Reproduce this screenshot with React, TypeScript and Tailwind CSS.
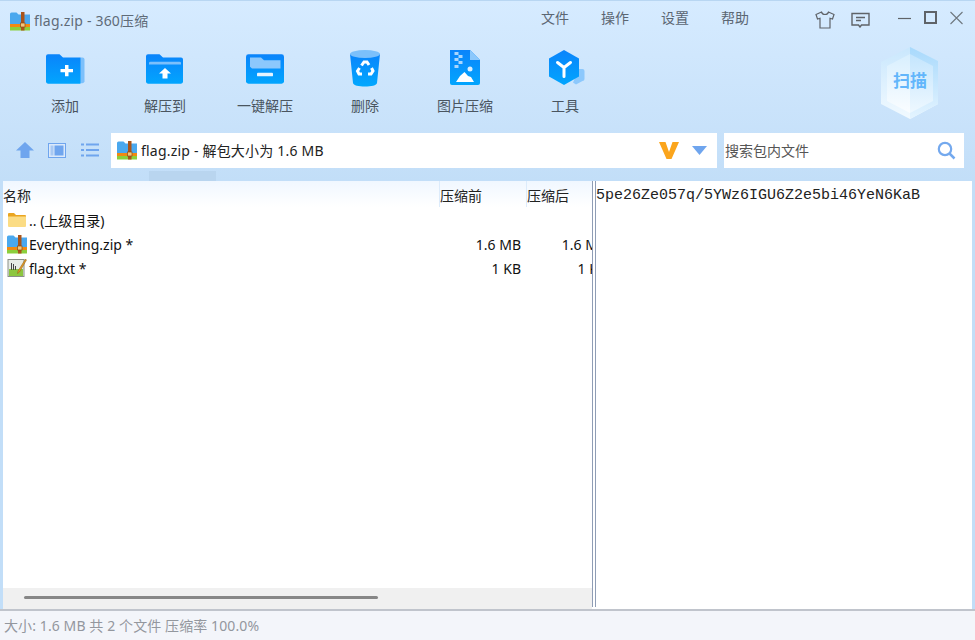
const uiFont = { fontFamily: '"Noto Sans", "Noto Sans CJK SC", sans-serif' }

function ZipIcon({ size = 20 }: { size?: number }) {
  return (
    <svg width={size} height={size} viewBox="0 0 20 20" className="shrink-0">
      <path d="M0 3a1.500 1.500 0 0 1 1.500-1.500h5l2 2H20V14H0z" fill="#4aa8ee" />
      <rect x="0" y="13" width="20" height="3" fill="#f08a12" />
      <rect x="0" y="16" width="20" height="3.500" fill="#8ccf3c" />
      <rect x="11" y="1" width="3.500" height="18.500" fill="#a9541a" />
      <rect x="10.500" y="12" width="4.500" height="4" fill="#f4c67a" stroke="#8a4a14" strokeWidth="0.700" />
    </svg>
  )
}

function AddIcon() {
  return (
    <svg width="40" height="32" viewBox="0 0 40 35" preserveAspectRatio="none" className="mt-[2px]">
      <defs>
        <linearGradient id="fa" x1="0" y1="0" x2="0" y2="1">
          <stop offset="0" stopColor="#0a84fb" />
          <stop offset="1" stopColor="#02a5fe" />
        </linearGradient>
      </defs>
      <rect x="34" y="5" width="5.500" height="28" rx="2" fill="#7cc0fb" />
      <path d="M1 3.500A2 2 0 0 1 3 1.500h11.500l3.500 3.500h17.500v28.500H3a2 2 0 0 1-2-2z" fill="url(#fa)" />
      <path d="M15.500 17.500h4.500v-4.500h3.500v4.500h4.500v3.500h-4.500v4.500h-3.500v-4.500h-4.500z" fill="#fff" />
    </svg>
  )
}

function ExtractIcon() {
  return (
    <svg width="40" height="32" viewBox="0 0 40 35" preserveAspectRatio="none" className="mt-[2px]">
      <defs>
        <linearGradient id="fb" x1="0" y1="0" x2="0" y2="1">
          <stop offset="0" stopColor="#0a84fb" />
          <stop offset="1" stopColor="#02a5fe" />
        </linearGradient>
      </defs>
      <path d="M1 3.500A2 2 0 0 1 3 1.500h11.500l3.500 3.500h18a2 2 0 0 1 2 2V31.500a2 2 0 0 1-2 2H3a2 2 0 0 1-2-2z" fill="url(#fb)" />
      <path d="M4 11a1.500 1.500 0 0 1 1.500-1.500h29a1.500 1.500 0 0 1 1.500 1.500v1.500H4z" fill="#7cc0fb" />
      <path d="M20 16.500l6 6h-3.500v5.500h-5v-5.500H14z" fill="#fff" />
    </svg>
  )
}

function OneKeyIcon() {
  return (
    <svg width="40" height="32" viewBox="0 0 40 35" preserveAspectRatio="none" className="mt-[2px]">
      <defs>
        <linearGradient id="fc" x1="0" y1="0" x2="0" y2="1">
          <stop offset="0" stopColor="#0a84fb" />
          <stop offset="1" stopColor="#02a5fe" />
        </linearGradient>
      </defs>
      <rect x="1" y="1.500" width="38" height="32" rx="2.500" fill="url(#fc)" />
      <path d="M5 5h11l3 3h16.500v9H7l-2-2z" fill="#8cc8fc" />
      <rect x="12" y="21.500" width="16" height="4" rx="1" fill="#e6f4ff" />
    </svg>
  )
}

function TrashIcon() {
  return (
    <svg width="32" height="38" viewBox="0 0 32 38">
      <defs>
        <linearGradient id="t" x1="0" y1="0" x2="0" y2="1">
          <stop offset="0" stopColor="#0a84fb" />
          <stop offset="1" stopColor="#02a8fe" />
        </linearGradient>
      </defs>
      <path d="M1 5l3 29c.2 2.500 6 3.500 12 3.500s11.800-1 12-3.500L31 5z" fill="url(#t)" />
      <ellipse cx="16" cy="5" rx="15" ry="4" fill="#7cc0fb" />
      <g fill="none" stroke="#fff" strokeWidth="3">
        <path d="M12.500 16.500l2.500-3.500h3l2 3" />
        <path d="M22.500 19l1.500 3-2 3h-3" />
        <path d="M13 25h-3l-1.500-3 2-3" />
      </g>
    </svg>
  )
}

function ImageZipIcon() {
  return (
    <svg width="30" height="35" viewBox="0 0 30 35">
      <defs>
        <linearGradient id="p" x1="0" y1="0" x2="0" y2="1">
          <stop offset="0" stopColor="#0a84fb" />
          <stop offset="1" stopColor="#02a5fe" />
        </linearGradient>
      </defs>
      <path d="M0 0h20l10 10v23a2 2 0 0 1-2 2H2a2 2 0 0 1-2-2z" fill="url(#p)" />
      <path d="M20 0l10 10H20z" fill="#8cc8fc" />
      <g fill="#a9d6fd">
        <rect x="4.500" y="2" width="4" height="3" />
        <rect x="8.500" y="5" width="4" height="3" />
        <rect x="4.500" y="8" width="4" height="3" />
        <rect x="8.500" y="11" width="4" height="3" />
        <rect x="4.500" y="15" width="4" height="3" />
      </g>
      <circle cx="20" cy="19" r="2.500" fill="#d9eeff" />
      <path d="M6 32l4-6 4.500-4 3.500 4 3 1 3 5z" fill="#fff" />
    </svg>
  )
}

function ToolIcon() {
  return (
    <svg width="38" height="36" viewBox="0 0 38 36" className="ml-[6px]">
      <defs>
        <linearGradient id="h" x1="0" y1="0" x2="0" y2="1">
          <stop offset="0" stopColor="#0a84fb" />
          <stop offset="1" stopColor="#02a5fe" />
        </linearGradient>
      </defs>
      <path d="M30 19h3.500a2 2 0 0 1 2 2v8a2 2 0 0 1-2 2L27 34.500l-3-2z" fill="#8cc8fc" />
      <path d="M15 0l15 8.500v18L15 35 0 26.500v-18z" fill="url(#h)" />
      <path d="M8.500 12.500l6.500 5 6.500-5M15 17.500v9" fill="none" stroke="#fff" strokeWidth="3" strokeLinecap="round" />
    </svg>
  )
}

const tools = [
  { label: '添加', icon: <AddIcon /> },
  { label: '解压到', icon: <ExtractIcon /> },
  { label: '一键解压', icon: <OneKeyIcon /> },
  { label: '删除', icon: <TrashIcon /> },
  { label: '图片压缩', icon: <ImageZipIcon /> },
  { label: '工具', icon: <ToolIcon /> },
]

const menus = ['文件', '操作', '设置', '帮助']

function ScanBadge() {
  return (
    <div className="relative w-[60px] h-[74px] shrink-0 mt-[4px]">
      <svg width="60" height="74" viewBox="0 0 60 74">
        <defs>
          <linearGradient id="sl" x1="0" y1="0" x2="0" y2="1">
            <stop offset="0" stopColor="#c9e7fd" />
            <stop offset="1" stopColor="#f2faff" />
          </linearGradient>
          <linearGradient id="sr" x1="0" y1="0" x2="0" y2="1">
            <stop offset="0" stopColor="#a8d9fc" />
            <stop offset="1" stopColor="#e4f4ff" />
          </linearGradient>
          <linearGradient id="il" x1="0" y1="0" x2="0" y2="1">
            <stop offset="0" stopColor="#d8effe" />
            <stop offset="1" stopColor="#fafdff" />
          </linearGradient>
          <linearGradient id="ir" x1="0" y1="0" x2="0" y2="1">
            <stop offset="0" stopColor="#c4e5fd" />
            <stop offset="1" stopColor="#eef8ff" />
          </linearGradient>
        </defs>
        <path d="M30 1l28 14v43L30 73 1 58V16z" fill="url(#sl)" />
        <path d="M30 1l28 14v43L30 73z" fill="url(#sr)" />
        <path d="M30 8L7 20v35l23 12z" fill="url(#il)" />
        <path d="M30 8l23 12v35L30 67z" fill="url(#ir)" />
      </svg>
      <span className="absolute left-0 right-0 top-[24px] text-center text-[17px] leading-[22px] font-bold text-[#62b6fb]">扫描</span>
    </div>
  )
}

function FileRow({ icon, name, before, after }: { icon: React.ReactNode; name: string; before?: string; after?: string }) {
  return (
    <div className="flex items-center h-6 text-[14px] text-[#111]">
      <div className="w-[26px] pl-[2px] flex justify-center shrink-0">{icon}</div>
      <div className="w-[410px] shrink-0 whitespace-nowrap">{name}</div>
      <div className="w-[82px] shrink-0 text-right whitespace-nowrap">{before}</div>
      <div className="w-[86px] shrink-0 text-right whitespace-nowrap">{after}</div>
    </div>
  )
}

export default function App() {
  return (
    <div className="w-[975px] h-[640px] flex flex-col overflow-hidden bg-[#f3f5fa]" style={uiFont}>
      <div className="h-[181px] shrink-0 flex flex-col bg-gradient-to-b from-[#d6ebff] to-[#c2def8] border-t border-[#b8d6f2]">
        <div className="h-[41px] flex items-start shrink-0">
          <div className="flex items-center gap-1 pl-[10px] pt-[10px] text-[14px] tracking-[0.2px] leading-5 text-[#5f6b78] w-[531px] shrink-0">
            <ZipIcon />
            <span>flag.zip - 360压缩</span>
          </div>
          <div className="flex pt-[7px] text-[14px] leading-5 text-[#5b6672]">
            {menus.map((m) => (
              <div key={m} className="w-[60px] pl-[10px]">{m}</div>
            ))}
          </div>
          <div className="flex items-center pt-[10px] ml-[44px] gap-[16px] text-[#5b6672]">
            <svg width="20" height="18" viewBox="0 0 20 18" fill="none" stroke="#5f6368" strokeWidth="1.200">
              <path d="M6.500 1L1 3.500l1.500 4.500 2.500-.8V17h10V7.200l2.500.8L19 3.500 13.500 1c-.5 2-1.800 2.500-3.500 2.500S7 3 6.500 1z" />
            </svg>
            <svg width="19" height="16" viewBox="0 0 19 16" fill="none" stroke="#5f6368" strokeWidth="1.400">
              <path d="M1 1.500h17v11.500h-7.500L9 15l-1.500-2H1z" />
              <path d="M5 5.500h9M5 8.500h5" />
            </svg>
          </div>
          <div className="flex items-center pt-[10px] ml-[28px] gap-[13px]">
            <svg width="13" height="14" viewBox="0 0 13 14"><path d="M0 7.500h13" stroke="#5f6368" strokeWidth="1.200" /></svg>
            <svg width="13" height="14" viewBox="0 0 13 14" fill="none"><rect x="1" y="1" width="11" height="11" stroke="#5f6368" strokeWidth="2" /></svg>
            <svg width="13" height="14" viewBox="0 0 13 14"><path d="M.5 1l12 12M12.500 1L.5 13" stroke="#6f777f" strokeWidth="1.100" /></svg>
          </div>
        </div>

        <div className="h-[90px] shrink-0 flex items-start pl-[15px]">
          <div className="flex w-[865px] shrink-0">
            {tools.map((t) => (
              <div key={t.label} className="w-[100px] flex flex-col items-center">
                <div className="h-[39px] flex items-center justify-center mt-[6px]">{t.icon}</div>
                <div className="mt-[9px] text-[14px] leading-5 text-[#4a5560] whitespace-nowrap">{t.label}</div>
              </div>
            ))}
          </div>
          <ScanBadge />
        </div>

        <div className="h-[36px] shrink-0 flex items-center">
          <div className="w-[111px] shrink-0 flex items-center pl-4 gap-[14px]">
            <svg width="18" height="16" viewBox="0 0 18 16"><path d="M9 0l9 8.500h-4.500V16h-9V8.500H0z" fill="#6fa5ee" /></svg>
            <svg width="18" height="15" viewBox="0 0 18 15">
              <rect x="0.500" y="0.500" width="17" height="14" fill="#dbe9fa" stroke="#6fa5ee" />
              <rect x="2.500" y="2.500" width="3" height="10" fill="#a9c9f3" />
              <rect x="6.500" y="2.500" width="9" height="10" fill="#6fa5ee" />
            </svg>
            <svg width="18" height="14" viewBox="0 0 18 14" fill="#6fa5ee" className="ml-[1px]">
              <rect x="0" y="0.500" width="3" height="2" />
              <rect x="5" y="0.500" width="13" height="2" />
              <rect x="0" y="6" width="3" height="2" />
              <rect x="5" y="6" width="13" height="2" />
              <rect x="0" y="11.500" width="3" height="2" />
              <rect x="5" y="11.500" width="13" height="2" />
            </svg>
          </div>
          <div className="w-[606px] h-[35px] shrink-0 bg-white flex items-center pl-[6px]">
            <ZipIcon />
            <span className="ml-1 text-[14px] tracking-[0.2px] text-[#222] whitespace-nowrap">flag.zip - 解包大小为 1.6 MB</span>
            <svg width="20" height="19" viewBox="0 0 20 19" className="ml-auto">
              <path d="M0 1h6.500L10 11l3.500-10H20l-7.500 17h-5z" fill="#fba51c" />
            </svg>
            <svg width="15" height="9" viewBox="0 0 15 9" className="ml-[13px] mr-[10px]"><path d="M0 0h15L7.500 9z" fill="#6fa5ee" /></svg>
          </div>
          <div className="w-[240px] h-[35px] ml-[7px] shrink-0 bg-white flex items-center pl-[1px] pr-[8px]">
            <span className="text-[14px] text-[#555]">搜索包内文件</span>
            <svg width="19" height="19" viewBox="0 0 19 19" fill="none" className="ml-auto">
              <circle cx="8" cy="8" r="6.200" stroke="#74a9ee" strokeWidth="2.200" />
              <path d="M12.500 12.500L17.500 17.500" stroke="#74a9ee" strokeWidth="2.500" />
            </svg>
          </div>
        </div>

        <div className="flex-1 relative">
          <div className="absolute left-[149px] top-[3px] w-[67px] h-[10px] bg-[#b9d5ef]" />
        </div>
      </div>

      <div className="h-[430px] shrink-0 flex border-b-2 border-[#c0c4cc] bg-white">
        <div className="w-[3px] shrink-0 bg-[#c2def8]" />
        <div className="w-[589px] shrink-0 flex flex-col overflow-hidden">
          <div className="h-[26px] shrink-0 flex items-stretch bg-gradient-to-b from-[#f0f7ff] to-white text-[14px] leading-5 text-[#222]">
            <div className="w-[437px] shrink-0 pt-[5px]">名称</div>
            <div className="w-[87px] shrink-0 pt-[5px] shadow-[-1px_0_0_#dcebfb]">压缩前</div>
            <div className="pt-[5px] shadow-[-1px_0_0_#dcebfb] flex-1">压缩后</div>
          </div>
          <div className="pt-[1px] flex-1">
            <FileRow
              name=".. (上级目录)"
              icon={
                <svg width="20" height="16" viewBox="0 0 20 16">
                  <path d="M1 2a1 1 0 0 1 1-1h5l2 2h9a1 1 0 0 1 1 1v2H1z" fill="#eaa520" />
                  <path d="M1 4.500h18V14a1 1 0 0 1-1 1H2a1 1 0 0 1-1-1z" fill="#fbdc84" />
                </svg>
              }
            />
            <FileRow name="Everything.zip *" before="1.6 MB" after="1.6 MB" icon={<ZipIcon />} />
            <FileRow
              name="flag.txt *"
              before="1 KB"
              after="1 KB"
              icon={
                <svg width="20" height="20" viewBox="0 0 20 20">
                  <rect x="1" y="1.500" width="16" height="17" fill="#e7ebe6" stroke="#8a8f88" />
                  <rect x="2" y="11" width="14" height="7" fill="#8cc63f" />
                  <path d="M4.500 5v7M6.500 6v6M8.500 8v4" stroke="#444" strokeWidth="1" />
                  <path d="M18.500 1L11 13l-.5 2.500 2-1.500L19.500 2z" fill="#e59b24" stroke="#8a5a14" strokeWidth="0.500" />
                </svg>
              }
            />
          </div>
          <div className="h-[21px] shrink-0 bg-[#f0f0f0] pl-[21px] pt-[8px]">
            <div className="w-[354px] h-[3px] rounded-full bg-[#868686]" />
          </div>
        </div>
        <div className="w-[4px] shrink-0 border-x border-[#8f9db5] mb-[2px] bg-white" />
        <div className="flex-1 pt-[5px] text-[15px] leading-5 text-[#222] border-r-[3px] border-[#c2def8]" style={{ fontFamily: '"Liberation Mono", monospace' }}>
          5pe26Ze057q/5YWz6IGU6Z2e5bi46YeN6KaB
        </div>
      </div>

      <div className="flex-1 flex items-center pl-1 text-[14px] tracking-[0.1px] text-[#93979e] whitespace-nowrap">
        大小: 1.6 MB 共 2 个文件 压缩率 100.0%
      </div>
    </div>
  )
}
